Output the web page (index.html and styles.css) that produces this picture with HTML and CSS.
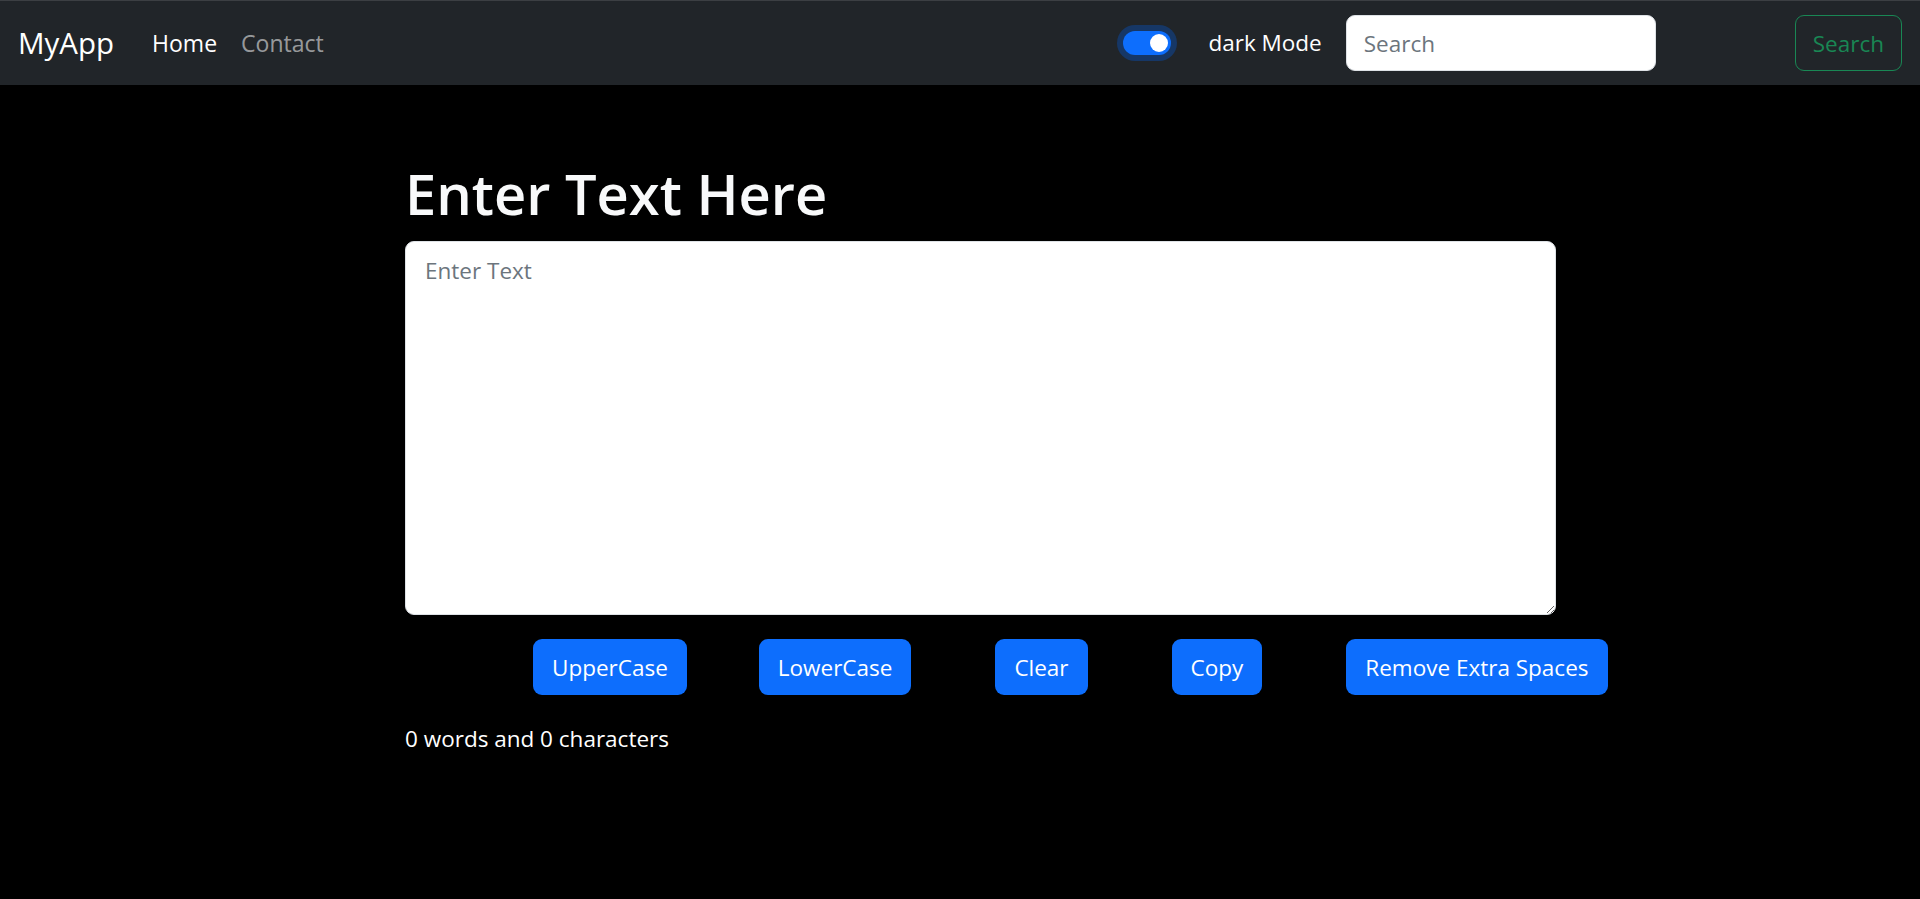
FILE: index.html
```html
<!DOCTYPE html>
<html lang="en">
<head>
<meta charset="utf-8">
<title>MyApp</title>
<link rel="stylesheet" href="styles.css">
</head>
<body>
<nav class="navbar">
  <a class="brand" href="#">MyApp</a>
  <ul class="nav-links">
    <li><a class="nav-link active" href="#">Home</a></li>
    <li><a class="nav-link" href="#">Contact</a></li>
  </ul>
  <div class="spacer"></div>
  <div class="switch-group">
    <span class="switch"><span class="knob"></span></span>
    <label class="switch-label">dark Mode</label>
  </div>
  <form class="search-form">
    <input class="search-input" type="search" placeholder="Search">
    <button class="btn-outline" type="button">Search</button>
  </form>
</nav>
<main class="container">
  <h1 class="title">Enter Text Here</h1>
  <textarea class="text-box" rows="8" placeholder="Enter Text"></textarea>
  <div class="btn-row">
    <button class="btn first" type="button">UpperCase</button>
    <button class="btn" type="button">LowerCase</button>
    <button class="btn" type="button">Clear</button>
    <button class="btn" type="button">Copy</button>
    <button class="btn" type="button">Remove Extra Spaces</button>
  </div>
  <p class="summary">0 words and 0 characters</p>
</main>
</body>
</html>
```
FILE: styles.css
```css
* { box-sizing: border-box; }
html, body { margin: 0; padding: 0; }
body {
  background: #000;
  color: #f8f9fa;
  font-family: "Open Sans", "Noto Sans", sans-serif;
  font-size: 22.5px;
  line-height: 1.5;
  height: 899px;
  overflow: hidden;
}
.navbar {
  display: flex;
  align-items: center;
  height: 85px;
  background: #212529;
  border-top: 1px solid #3c3f43;
  padding: 0 18px;
}
.brand {
  color: #fff;
  text-decoration: none;
  font-size: 29.5px;
  margin-right: 26px;
}
.nav-links {
  list-style: none;
  display: flex;
  margin: 0;
  padding: 0;
}
.nav-link {
  display: block;
  padding: 12px 12px;
  font-size: 23px;
  color: rgba(255,255,255,.55);
  text-decoration: none;
}
.nav-link.active { color: #fff; }
.spacer { flex: 1; }
.switch-group {
  display: flex;
  align-items: center;
  margin-right: 24px;
}
.switch {
  position: relative;
  width: 48px;
  height: 24px;
  border-radius: 12px;
  background: #0d6efd;
  box-shadow: 0 0 0 6px #163766;
  margin-right: 37px;
}
.knob {
  position: absolute;
  right: 3px;
  top: 3px;
  width: 18px;
  height: 18px;
  border-radius: 50%;
  background: #fff;
}
.switch-label { color: #fff; }
.search-form {
  display: flex;
  align-items: center;
}
.search-input {
  width: 310px;
  height: 56px;
  border: 1px solid #dee2e6;
  border-radius: 9px;
  padding: 0 17px;
  font-family: inherit;
  font-size: 22.5px;
  color: #212529;
  background: #fff;
  margin-right: 139px;
  outline: none;
}
.search-input::placeholder { color: #6c757d; }
.btn-outline {
  height: 56px;
  padding: 0 17px;
  border: 1px solid #198754;
  border-radius: 9px;
  background: transparent;
  color: #198754;
  font-family: inherit;
  font-size: 22.5px;
}
.container {
  padding: 72px 0 0 405px;
}
.title {
  margin: 0 0 12px;
  font-size: 56px;
  font-weight: 600;
  line-height: 72px;
  color: #f8f9fa;
}
.text-box {
  display: block;
  width: 1151px;
  height: 374px;
  border: 1px solid #dee2e6;
  border-radius: 9px;
  padding: 12px 19px;
  font-family: inherit;
  font-size: 22.5px;
  line-height: 1.5;
  color: #212529;
  background: #fff;
  margin-bottom: 24px;
  outline: none;
}
.text-box::placeholder { color: #6c757d; }
.btn-row {
  display: flex;
  gap: 84px;
  padding-left: 128px;
}
.btn {
  height: 56px;
  padding: 0 19px;
  border: none;
  border-radius: 9px;
  background: #0d6efd;
  color: #fff;
  font-family: inherit;
  font-size: 22.5px;
}
.btn.first { margin-right: -12px; }
.summary {
  margin: 27px 0 0;
  color: #fff;
}
```
